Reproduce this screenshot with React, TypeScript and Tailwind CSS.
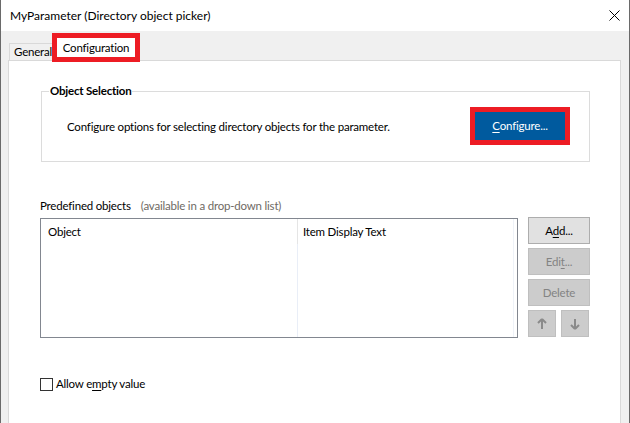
import React from 'react';

const font = { fontFamily: '"Segoe UI", Lato, "Noto Sans", sans-serif' };

const ArrowUp = () => (
  <svg width="10" height="12" viewBox="0 0 10 12">
    <path d="M5 1 L1 5 M5 1 L9 5 M5 1 V11" stroke="#8a8a8a" strokeWidth="2" fill="none" />
  </svg>
);

const ArrowDown = () => (
  <svg width="10" height="12" viewBox="0 0 10 12">
    <path d="M5 11 L1 7 M5 11 L9 7 M5 11 V1" stroke="#8a8a8a" strokeWidth="2" fill="none" />
  </svg>
);

const SideButton: React.FC<{ disabled?: boolean; children: React.ReactNode }> = ({ disabled, children }) => (
  <div
    className={
      disabled
        ? 'h-[27px] flex items-center justify-center border border-[#bfbfbf] bg-[#cccccc] text-[#838383]'
        : 'h-[27px] flex items-center justify-center border border-[#adadad] bg-[#e1e1e1] text-black'
    }
  >
    {children}
  </div>
);

export default function App() {
  return (
    <div
      className="w-[630px] h-[423px] overflow-hidden flex flex-col border-l border-r border-[#6a6a6a] bg-[#f0f0f0] text-[11.5px] tracking-[-0.2px] text-black"
      style={font}
    >
      {/* Title bar */}
      <div className="h-[31px] bg-white flex items-center justify-between pl-[9px] pr-[9px] shrink-0">
        <span className="leading-[16px] text-[12px] tracking-normal">MyParameter (Directory object picker)</span>
        <svg width="11" height="11" viewBox="0 0 11 11">
          <path d="M0.5 0.5 L10.5 10.5 M10.5 0.5 L0.5 10.5" stroke="#000" strokeWidth="1" />
        </svg>
      </div>

      {/* Body */}
      <div className="flex-1 flex flex-col pl-[7px] pr-[8px]">
        {/* Tabs */}
        <div className="h-[29px] flex items-end shrink-0">
          <div className="ml-[1px] w-[43px] h-[17px] border-t border-l border-[#d9d9d9] flex items-center pl-[4px] leading-[16px] whitespace-nowrap">
            General
          </div>
          <div className="relative z-10 mb-[-2px] w-[88px] h-[29px] border-[5px] border-[#ed1c24] bg-white flex items-center justify-center leading-[16px]">
            Configuration
          </div>
        </div>

        {/* Tab page */}
        <div className="flex-1 bg-white border border-b-0 border-[#d9d9d9] flex flex-col">
          <fieldset className="mt-[22px] ml-[32px] mr-[30px] border border-[#dcdcdc] px-0 pb-[16px]">
            <legend className="ml-[7px] px-[1px] font-bold leading-[16px]">Object Selection</legend>
            <div className="pt-[8px] pl-[25px] pr-[19px] flex items-center justify-between">
              <span className="leading-[16px] mt-[1px]">Configure options for selecting directory objects for the parameter.</span>
              <div className="w-[100px] h-[38px] border-[5px] border-[#ed1c24]">
                <div className="w-full h-full bg-[#005a9e] text-white flex items-center justify-center leading-[16px]">
                  <span>
                    <u className="underline-offset-2">C</u>onfigure...
                  </span>
                </div>
              </div>
            </div>
          </fieldset>

          {/* Predefined objects */}
          <div className="mt-[36px] ml-[31px] mr-[30px] flex flex-col">
            <div className="leading-[16px] flex gap-[10px]">
              <span>Predefined objects</span>
              <span className="text-[#6f6a64]">(available in a drop-down list)</span>
            </div>
            <div className="mt-[4px] flex gap-[10px]">
              <div className="w-[478px] h-[120px] border border-[#828790] bg-white flex">
                <div className="w-[256px] flex flex-col">
                  <div className="h-[25px] flex items-center pl-[7px] leading-[16px]">Object</div>
                </div>
                <div className="w-[216px] flex flex-col border-l border-[#e9eef7]">
                  <div className="h-[25px] flex items-center pl-[5px] leading-[16px] border-l border-[#e5e5e5] -ml-[1px]">
                    Item Display Text
                  </div>
                </div>
                <div className="flex-1 border-l border-[#eef2f8]" />
              </div>
              <div className="w-[62px] mt-[-1px] flex flex-col gap-[4px]">
                <SideButton>
                  <span>
                    A<u className="underline-offset-2">d</u>d...
                  </span>
                </SideButton>
                <SideButton disabled>
                  <span>
                    Edi<u className="underline-offset-2">t</u>...
                  </span>
                </SideButton>
                <SideButton disabled>Delete</SideButton>
                <div className="flex gap-[5px]">
                  <div className="w-[28px] h-[27px] border border-[#bfbfbf] bg-[#cccccc] flex items-center justify-center">
                    <ArrowUp />
                  </div>
                  <div className="w-[28px] h-[27px] border border-[#bfbfbf] bg-[#cccccc] flex items-center justify-center">
                    <ArrowDown />
                  </div>
                </div>
              </div>
            </div>

            {/* Checkbox */}
            <div className="mt-[38px] flex items-center gap-[3px]">
              <div className="w-[13px] h-[13px] border border-[#333333] bg-white" />
              <span className="leading-[16px]">
                Allow e<u className="underline-offset-2">m</u>pty value
              </span>
            </div>
          </div>
        </div>
      </div>
    </div>
  );
}
